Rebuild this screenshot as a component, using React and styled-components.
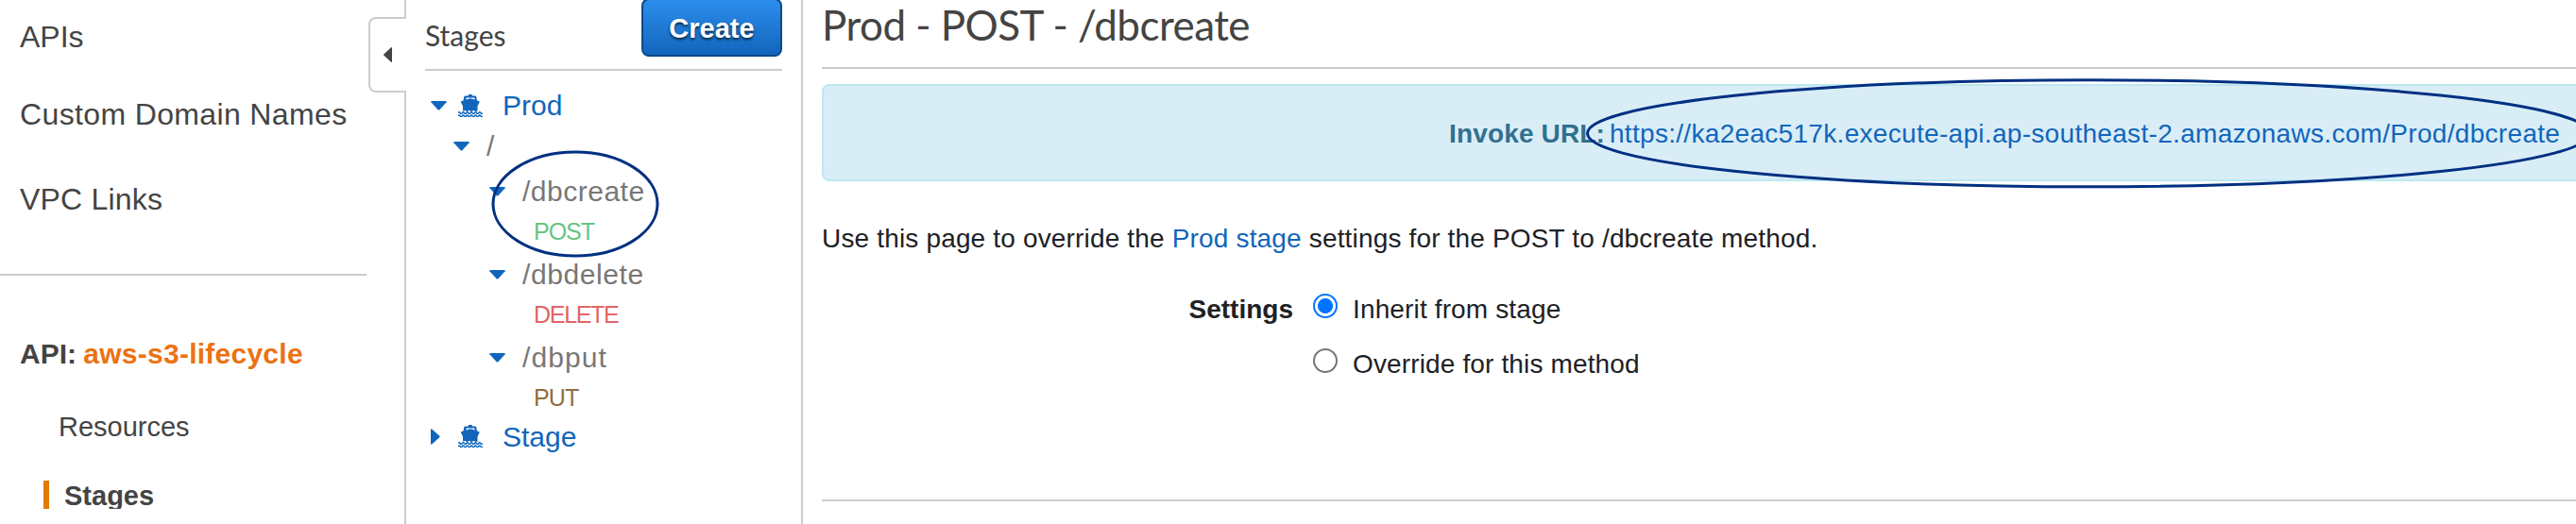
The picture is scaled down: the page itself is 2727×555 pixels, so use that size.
import React from "react";
import styled, { createGlobalStyle } from "styled-components";

const Global = createGlobalStyle`
  * { box-sizing: border-box; }
  html, body { margin: 0; background: #fff; overflow: hidden; }
  body { font-family: "Liberation Sans", Arial, sans-serif; color: #202124; font-size: 28px; }
`;

const Page = styled.div`
  position: relative;
  display: flex;
  width: 2727px;
  height: 555px;
  overflow: hidden;
`;

const Sidebar = styled.nav`
  position: relative;
  flex: none;
  width: 430px;
  height: 555px;
  border-right: 2px solid #ccc;
  color: #444;
`;

const TopLinks = styled.div`
  width: 388px;
  height: 292px;
  padding-top: 19px;
  border-bottom: 2px solid #ccc;
`;

const TopLink = styled.div`
  height: ${(p) => p.$h}px;
  padding-left: 21px;
  font-size: 32px;
  line-height: 40px;
  letter-spacing: ${(p) => p.$ls || 0}px;
  white-space: nowrap;
`;

const ApiTitle = styled.div`
  padding: 65px 0 0 21px;
  font-size: 30px;
  line-height: 36px;
  font-weight: bold;
  white-space: nowrap;
`;

const ApiName = styled.span`
  color: #ec7211;
  margin-left: -1px;
  letter-spacing: 0.25px;
`;

const SubLink = styled.div`
  margin: 42px 0 0 62px;
  font-size: 29px;
  line-height: 34px;
`;

const ActiveLink = styled.div`
  margin: 40px 0 0 46px;
  height: 30px;
  overflow: hidden;
  padding-left: 16px;
  border-left: 6px solid #e07b00;
  font-size: 29px;
  line-height: 33px;
  font-weight: bold;
`;

const CollapseTab = styled.button`
  position: absolute;
  left: 390px;
  top: 18px;
  width: 40px;
  height: 80px;
  padding: 0 0 0 14px;
  display: flex;
  align-items: center;
  background: #fff;
  border: 2px solid #ccc;
  border-right: 0;
  border-radius: 8px 0 0 8px;
`;

const StagesPanel = styled.section`
  flex: none;
  width: 420px;
  height: 555px;
  padding: 0 20px;
  border-right: 2px solid #ccc;
`;

const PanelHead = styled.header`
  display: flex;
  justify-content: space-between;
  height: 75px;
  border-bottom: 2px solid #ccc;
`;

const PanelTitle = styled.h2`
  margin: 0;
  padding-top: 19px;
  font: 400 30px/36px Lato, sans-serif;
  color: #444;
`;

const CreateButton = styled.button`
  width: 149px;
  height: 62px;
  margin-top: -2px;
  padding: 1px 0 0;
  border: 2px solid #0b4a8c;
  border-radius: 8px;
  background: linear-gradient(#2e8ded, #1166bb);
  color: #fff;
  font: bold 29px/34px "Liberation Sans", Arial, sans-serif;
  text-shadow: 0 2px 3px rgba(0, 0, 0, 0.7);
`;

const Tree = styled.div`
  padding-top: 25px;
`;

const Row = styled.div`
  display: flex;
  align-items: center;
  height: ${(p) => p.$h}px;
  padding-left: ${(p) => p.$indent}px;
  white-space: nowrap;
`;

const ArrowSlot = styled.span`
  display: flex;
  width: ${(p) => p.$w}px;
`;

const ShipSlot = styled.span`
  display: flex;
  width: 47px;
  margin-top: -1px;
`;

const StageName = styled.span`
  padding-top: ${(p) => p.$drop || 0}px;
  font-size: 30px;
  color: #1166bb;
`;

const PathName = styled.span`
  font-size: 30px;
  color: #777;
  letter-spacing: ${(p) => p.$ls || 0}px;
`;

const Method = styled.span`
  margin-top: -3px;
  font-size: 25px;
  color: ${(p) => p.$color};
  letter-spacing: ${(p) => p.$ls || 0}px;
`;

const Main = styled.main`
  flex: none;
  width: 1900px;
  padding-left: 20px;
`;

const Title = styled.h1`
  margin: 0;
  height: 73px;
  border-bottom: 2px solid #ccc;
  font: 400 44px/52px Lato, sans-serif;
  letter-spacing: -0.55px;
  color: #444;
`;

const Alert = styled.div`
  display: flex;
  align-items: center;
  margin-top: 16px;
  height: 103px;
  padding: 2px 0 0 662px;
  border: 2px solid #bce8f1;
  border-radius: 8px;
  background: #d9edf7;
  white-space: pre;
`;

const AlertLabel = styled.b`
  margin-right: -3px;
  color: #31708f;
  letter-spacing: 0.15px;
`;

const Link = styled.a`
  color: #1166bb;
`;

const InvokeLink = styled(Link)`
  letter-spacing: 0.31px;
`;

const Description = styled.p`
  margin: 43px 0 0;
  line-height: 36px;
  white-space: nowrap;
  letter-spacing: 0.165px;
`;

const Settings = styled.div`
  display: flex;
  height: 260px;
  padding-top: 39px;
  border-bottom: 2px solid #ccc;
`;

const SettingsLabel = styled.b`
  width: 499px;
  text-align: right;
  line-height: 36px;
`;

const Options = styled.div`
  margin-left: 21px;
`;

const Option = styled.label`
  display: flex;
  height: 58px;
  gap: 16px;
  line-height: 36px;
  letter-spacing: 0.14px;
`;

const Radio = styled.span`
  width: 26px;
  height: 26px;
  margin-top: 1px;
  border: 2px solid ${(p) => (p.$on ? "#0075ff" : "#767676")};
  border-radius: 50%;
  background: ${(p) => (p.$on ? "radial-gradient(circle, #0075ff 7.6px, #fff 8.4px)" : "#fff")};
`;

const Marks = styled.svg`
  position: absolute;
  inset: 0;
  pointer-events: none;
`;

const Down = () => (
  <svg width="17" height="10" viewBox="0 0 17 10">
    <path d="M1 0h15q1 0 .6 1.2L9.6 9q-1.1 1-2.2 0L.4 1.2Q0 0 1 0z" fill="#1166bb" />
  </svg>
);

const Right = () => (
  <svg width="10" height="17" viewBox="0 0 10 17">
    <path d="M0 1v15q0 1 1.2.6L9 9.6q1-1.1 0-2.2L1.2.4Q0 0 0 1z" fill="#1166bb" />
  </svg>
);

const Left = () => (
  <svg width="9" height="16" viewBox="0 0 9 16">
    <path d="M9 .8v14.4q0 1-1 .6L.5 8.8Q-.3 8 .5 7.2L8 .2q1-.4 1 .6z" fill="#444" />
  </svg>
);

const Ship = () => (
  <svg width="26" height="24" viewBox="0 0 26 24">
    <path d="M11.200 0h3.600v1.400h3.200q1 0 1.200 1l.8 4 2.200.9q.6.300.3 1l-2 4.100v5.100q-.7.600-1.600.6t-1.600-.8q-.8-.8-1.600 0t-1.600.8-1.600-.8q-.8-.8-1.600 0t-1.600.8q-.9 0-1.600-.8-.8-.8-1.600 0-.6.300-1.100 0v-4.900l-2-4.100q-.3-.7.300-1l2.200-.9.800-4q.2-1 1.200-1h3.200zM8.700 3.600l-.4 2L13 4.200l4.700 1.400-.4-2z" fill="#1166bb" fillRule="evenodd" />
    <path d="M0 19.600q1-1.800 2.170 0t2.170 0 2.170 0 2.170 0 2.170 0 2.170 0 2.170 0 2.170 0 2.170 0 2.170 0 2.170 0 2.130 0M0 22.800q1-1.800 2.170 0t2.170 0 2.170 0 2.170 0 2.170 0 2.170 0 2.170 0 2.170 0 2.170 0 2.170 0 2.170 0 2.130 0" fill="none" stroke="#1166bb" strokeWidth="1.5" />
  </svg>
);

const resources = [
  { path: "/dbcreate", spacing: 0.5, method: "POST", methodSpacing: -1, color: "#67c583" },
  { path: "/dbdelete", spacing: 0.6, method: "DELETE", methodSpacing: -1.3, color: "#e06666" },
  { path: "/dbput", spacing: 1.1, method: "PUT", methodSpacing: -0.9, color: "#946c3c" },
];

export default function App() {
  return (
    <Page>
      <Global />
      <Sidebar>
        <TopLinks>
          <TopLink $h={82}>APIs</TopLink>
          <TopLink $h={90} $ls={0.36}>Custom Domain Names</TopLink>
          <TopLink $h={60} $ls={0.2}>VPC Links</TopLink>
        </TopLinks>
        <ApiTitle>API: <ApiName>aws-s3-lifecycle</ApiName></ApiTitle>
        <SubLink>Resources</SubLink>
        <ActiveLink>Stages</ActiveLink>
        <CollapseTab aria-label="Collapse"><Left /></CollapseTab>
      </Sidebar>
      <StagesPanel>
        <PanelHead>
          <PanelTitle>Stages</PanelTitle>
          <CreateButton>Create</CreateButton>
        </PanelHead>
        <Tree>
          <Row $h={24} $indent={6}>
            <ArrowSlot $w={29}><Down /></ArrowSlot>
            <ShipSlot><Ship /></ShipSlot>
            <StageName>Prod</StageName>
          </Row>
          <Row $h={62} $indent={30}>
            <ArrowSlot $w={35}><Down /></ArrowSlot>
            <PathName>/</PathName>
          </Row>
          {resources.map((r) => (
            <React.Fragment key={r.path}>
              <Row $h={34} $indent={68}>
                <ArrowSlot $w={35}><Down /></ArrowSlot>
                <PathName $ls={r.spacing}>{r.path}</PathName>
              </Row>
              <Row $h={54} $indent={115}>
                <Method $color={r.color} $ls={r.methodSpacing}>{r.method}</Method>
              </Row>
            </React.Fragment>
          ))}
          <Row $h={24} $indent={6}>
            <ArrowSlot $w={29}><Right /></ArrowSlot>
            <ShipSlot><Ship /></ShipSlot>
            <StageName $drop={2}>Stage</StageName>
          </Row>
        </Tree>
      </StagesPanel>
      <Main>
        <Title>Prod - POST - /dbcreate</Title>
        <Alert>
          <AlertLabel>Invoke URL: </AlertLabel>
          <InvokeLink>https://ka2eac517k.execute-api.ap-southeast-2.amazonaws.com/Prod/dbcreate</InvokeLink>
        </Alert>
        <Description>
          Use this page to override the <Link>Prod stage</Link> settings for the POST to /dbcreate method.
        </Description>
        <Settings>
          <SettingsLabel>Settings</SettingsLabel>
          <Options>
            <Option><Radio $on />Inherit from stage</Option>
            <Option><Radio />Override for this method</Option>
          </Options>
        </Settings>
      </Main>
      <Marks width="2727" height="555" fill="none" stroke="#003082" strokeWidth="3">
        <ellipse cx="609" cy="216" rx="87" ry="55" />
        <ellipse cx="2211" cy="141.300" rx="530.500" ry="56.500" />
      </Marks>
    </Page>
  );
}
